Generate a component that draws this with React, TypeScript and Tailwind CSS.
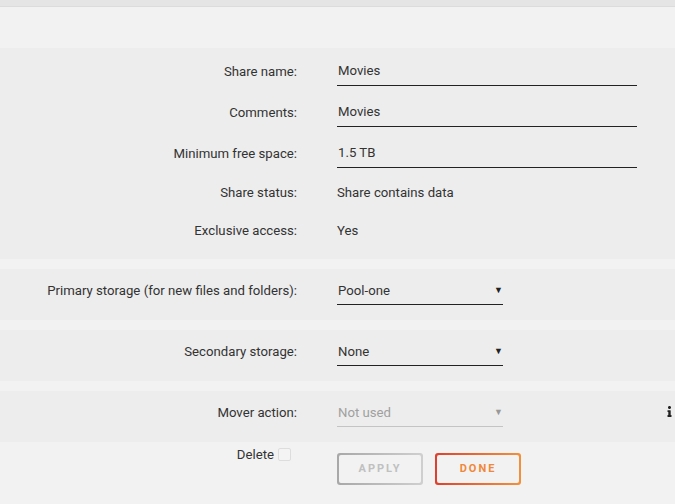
import { FaInfo } from 'react-icons/fa';

const font = { fontFamily: 'Roboto, "Liberation Sans", sans-serif' };

function Label({ children }: { children: React.ReactNode }) {
  return <div className="w-[297px] shrink-0 pt-[1px] text-right text-[13.2px] text-[#333]">{children}</div>;
}

function TextInput({ value }: { value: string }) {
  return (
    <div className="ml-[40px] flex h-[30px] w-[300px] items-center border-b border-[#222] pt-[1px] text-[13.2px] text-[#333]">
      <span className="pl-px">{value}</span>
    </div>
  );
}

function Select({ value, muted }: { value: string; muted?: boolean }) {
  return (
    <div
      className={`ml-[40px] flex h-[30px] w-[166px] items-center justify-between border-b pt-[2px] text-[13.2px] ${
        muted ? 'border-[#c4c4c4] text-[#a0a0a0]' : 'border-[#222] text-[#333]'
      }`}
    >
      <span className="pl-px">{value}</span>
      <span className={`text-[9px] ${muted ? 'text-[#999]' : 'text-[#222]'}`}>▼</span>
    </div>
  );
}

function Row({ label, children, className = '' }: { label: string; children: React.ReactNode; className?: string }) {
  return (
    <div className={`flex items-center ${className}`}>
      <Label>{label}</Label>
      {children}
    </div>
  );
}

export default function App() {
  return (
    <div className="min-h-[504px] w-[675px] bg-[#f2f2f2]" style={font}>
      <div className="h-[6px] bg-[#e5e5e5]" />
      <div className="h-px bg-[#dcdcdc]" />
      <div className="h-[41px]" />

      {/* share settings */}
      <section className="bg-[#ededed] pb-[16px] pt-[8px]">
        <Row label="Share name:" className="mb-[11px]">
          <TextInput value="Movies" />
        </Row>
        <Row label="Comments:" className="mb-[11px]">
          <TextInput value="Movies" />
        </Row>
        <Row label="Minimum free space:" className="mb-[11px]">
          <TextInput value="1.5 TB" />
        </Row>
        <Row label="Share status:" className="mb-[12px] h-[26px]">
          <span className="ml-[40px] pt-[1px] text-[13.2px] text-[#333]">Share contains data</span>
        </Row>
        <Row label="Exclusive access:" className="h-[26px]">
          <span className="ml-[40px] pt-[1px] text-[13.2px] text-[#333]">Yes</span>
        </Row>
      </section>

      <section className="mt-[10px] bg-[#ededed] pb-[15px] pt-[6px]">
        <Row label="Primary storage (for new files and folders):">
          <Select value="Pool-one" />
        </Row>
      </section>

      <section className="mt-[10px] bg-[#ededed] pb-[15px] pt-[6px]">
        <Row label="Secondary storage:">
          <Select value="None" />
        </Row>
      </section>

      <section className="mt-[10px] bg-[#ededed] pb-[15px] pt-[6px]">
        <Row label="Mover action:">
          <Select value="Not used" muted />
          <div className="mb-[1px] ml-auto mr-0 text-[#222]">
            <FaInfo size={11} />
          </div>
        </Row>
      </section>

      <div className="flex items-start pt-[3px]">
        <div className="flex w-[297px] shrink-0 items-center justify-end gap-[4px] text-[13.2px] text-[#333]">
          Delete
          <span className="mr-[6px] inline-block h-[13px] w-[13px] rounded-[2px] border border-[#ddd] bg-[#f4f4f4]" />
        </div>
        <div className="ml-[40px] mt-[8px] flex gap-[12px]">
          <button className="h-[32px] w-[86px] rounded-[3px] bg-gradient-to-r from-[#a8a8a8] to-[#cfcfcf] p-[2px]">
            <span className="flex h-full w-full items-center justify-center rounded-[2px] bg-[#f2f2f2] text-[11px] font-bold tracking-[2px] text-[#c0c0c0]">
              APPLY
            </span>
          </button>
          <button className="h-[32px] w-[86px] rounded-[3px] bg-gradient-to-r from-[#e03e2d] to-[#f2903a] p-[2px]">
            <span className="flex h-full w-full items-center justify-center rounded-[2px] bg-[#f2f2f2] text-[11px] font-bold tracking-[2px] text-[#f0883a]">
              DONE
            </span>
          </button>
        </div>
      </div>
    </div>
  );
}
